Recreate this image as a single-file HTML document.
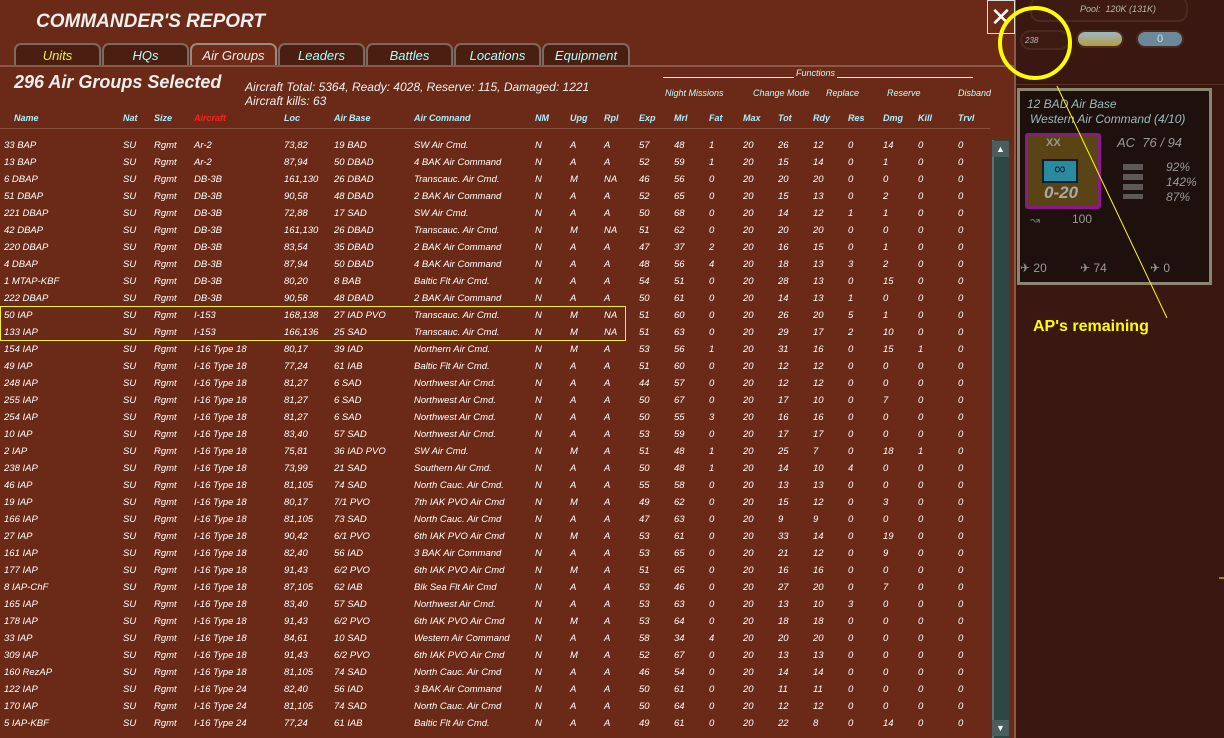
<!DOCTYPE html>
<html><head><meta charset="utf-8"><style>
*{margin:0;padding:0;box-sizing:border-box}
body{width:1224px;height:738px;overflow:hidden;background:#6b2a17;font-family:"Liberation Sans",sans-serif;position:relative;color:#fff}
.a{position:absolute;white-space:nowrap}
.title{left:36px;top:11px;font-size:19px;font-weight:bold;font-style:italic;color:#eee}
.tab{position:absolute;top:43px;height:23px;border:2px solid #7a6a60;border-bottom:none;border-radius:7px 7px 0 0;background:#4a1f12;font-size:13px;font-style:italic;color:#aff;text-align:center;line-height:21px}
.tab.act{background:#6e2c18;color:#eee;border-color:#9a8a80}
.sel{left:14px;top:72px;font-size:18px;font-weight:bold;font-style:italic;color:#eee}
.st{font-size:12px;font-style:italic;color:#eee}
.fn{font-size:9px;font-style:italic;color:#bff;top:88px}
.hd{position:absolute;top:113px;left:0;width:990px;height:12px;font-size:9px;font-weight:bold;font-style:italic;color:#aef}
.hd i,.r i{position:absolute;font-style:italic;white-space:nowrap}
.r{position:absolute;left:0;width:990px;height:12px;font-size:9.5px;color:#fff}
.r i:nth-child(1),.hd i:nth-child(1){left:4px}
.hd i:nth-child(1){left:14px}
.r i:nth-child(2),.hd i:nth-child(2){left:123px}
.r i:nth-child(3),.hd i:nth-child(3){left:154px}
.r i:nth-child(4),.hd i:nth-child(4){left:194px}
.r i:nth-child(5),.hd i:nth-child(5){left:284px}
.r i:nth-child(6),.hd i:nth-child(6){left:334px}
.r i:nth-child(7),.hd i:nth-child(7){left:414px}
.r i:nth-child(8),.hd i:nth-child(8){left:535px}
.r i:nth-child(9),.hd i:nth-child(9){left:570px}
.r i:nth-child(10),.hd i:nth-child(10){left:604px}
.r i:nth-child(11),.hd i:nth-child(11){left:639px}
.r i:nth-child(12),.hd i:nth-child(12){left:674px}
.r i:nth-child(13),.hd i:nth-child(13){left:709px}
.r i:nth-child(14),.hd i:nth-child(14){left:743px}
.r i:nth-child(15),.hd i:nth-child(15){left:778px}
.r i:nth-child(16),.hd i:nth-child(16){left:813px}
.r i:nth-child(17),.hd i:nth-child(17){left:848px}
.r i:nth-child(18),.hd i:nth-child(18){left:883px}
.r i:nth-child(19),.hd i:nth-child(19){left:918px}
.r i:nth-child(20),.hd i:nth-child(20){left:958px}
.pill{position:absolute;border-radius:10px;border:2px solid #4a2a20}
</style></head><body>
<div class="a title">COMMANDER'S REPORT</div>
<div class="tab" style="left:14px;width:87px;color:#ee3">Units</div>
<div class="tab" style="left:102px;width:87px">HQs</div>
<div class="tab act" style="left:190px;width:87px">Air Groups</div>
<div class="tab" style="left:278px;width:87px">Leaders</div>
<div class="tab" style="left:366px;width:87px">Battles</div>
<div class="tab" style="left:454px;width:87px">Locations</div>
<div class="tab" style="left:542px;width:88px">Equipment</div>
<div class="a" style="left:0;top:65px;width:1014px;height:2px;background:#8a5a48"></div>
<div class="a sel">296 Air Groups Selected</div>
<div class="a st" style="left:245px;top:80px">Aircraft Total: 5364, Ready: 4028, Reserve: 115, Damaged: 1221</div>
<div class="a st" style="left:245px;top:94px">Aircraft kills: 63</div>
<div class="a" style="left:663px;top:77px;width:310px;height:1px;background:#eee"></div>
<div class="a fn" style="left:794px;top:68px;background:#6b2a17;padding:0 2px">Functions</div>
<div class="a fn" style="left:665px">Night Missions</div>
<div class="a fn" style="left:753px">Change Mode</div>
<div class="a fn" style="left:826px">Replace</div>
<div class="a fn" style="left:887px">Reserve</div>
<div class="a fn" style="left:958px">Disband</div>
<div class="hd"><i>Name</i><i>Nat</i><i>Size</i><i style="color:#f22">Aircraft</i><i>Loc</i><i>Air Base</i><i>Air Comnand</i><i>NM</i><i>Upg</i><i>Rpl</i><i>Exp</i><i>Mrl</i><i>Fat</i><i>Max</i><i>Tot</i><i>Rdy</i><i>Res</i><i>Dmg</i><i>Kill</i><i>Trvl</i></div>
<div class="a" style="left:0;top:128px;width:990px;height:1px;background:#8a5040"></div>

<div class="r" style="top:140px"><i>33 BAP</i><i>SU</i><i>Rgmt</i><i>Ar-2</i><i>73,82</i><i>19 BAD</i><i>SW Air Cmd.</i><i>N</i><i>A</i><i>A</i><i>57</i><i>48</i><i>1</i><i>20</i><i>26</i><i>12</i><i>0</i><i>14</i><i>0</i><i>0</i></div>
<div class="r" style="top:157px"><i>13 BAP</i><i>SU</i><i>Rgmt</i><i>Ar-2</i><i>87,94</i><i>50 DBAD</i><i>4 BAK Air Command</i><i>N</i><i>A</i><i>A</i><i>52</i><i>59</i><i>1</i><i>20</i><i>15</i><i>14</i><i>0</i><i>1</i><i>0</i><i>0</i></div>
<div class="r" style="top:174px"><i>6 DBAP</i><i>SU</i><i>Rgmt</i><i>DB-3B</i><i>161,130</i><i>26 DBAD</i><i>Transcauc. Air Cmd.</i><i>N</i><i>M</i><i>NA</i><i>46</i><i>56</i><i>0</i><i>20</i><i>20</i><i>20</i><i>0</i><i>0</i><i>0</i><i>0</i></div>
<div class="r" style="top:191px"><i>51 DBAP</i><i>SU</i><i>Rgmt</i><i>DB-3B</i><i>90,58</i><i>48 DBAD</i><i>2 BAK Air Command</i><i>N</i><i>A</i><i>A</i><i>52</i><i>65</i><i>0</i><i>20</i><i>15</i><i>13</i><i>0</i><i>2</i><i>0</i><i>0</i></div>
<div class="r" style="top:208px"><i>221 DBAP</i><i>SU</i><i>Rgmt</i><i>DB-3B</i><i>72,88</i><i>17 SAD</i><i>SW Air Cmd.</i><i>N</i><i>A</i><i>A</i><i>50</i><i>68</i><i>0</i><i>20</i><i>14</i><i>12</i><i>1</i><i>1</i><i>0</i><i>0</i></div>
<div class="r" style="top:225px"><i>42 DBAP</i><i>SU</i><i>Rgmt</i><i>DB-3B</i><i>161,130</i><i>26 DBAD</i><i>Transcauc. Air Cmd.</i><i>N</i><i>M</i><i>NA</i><i>51</i><i>62</i><i>0</i><i>20</i><i>20</i><i>20</i><i>0</i><i>0</i><i>0</i><i>0</i></div>
<div class="r" style="top:242px"><i>220 DBAP</i><i>SU</i><i>Rgmt</i><i>DB-3B</i><i>83,54</i><i>35 DBAD</i><i>2 BAK Air Command</i><i>N</i><i>A</i><i>A</i><i>47</i><i>37</i><i>2</i><i>20</i><i>16</i><i>15</i><i>0</i><i>1</i><i>0</i><i>0</i></div>
<div class="r" style="top:259px"><i>4 DBAP</i><i>SU</i><i>Rgmt</i><i>DB-3B</i><i>87,94</i><i>50 DBAD</i><i>4 BAK Air Command</i><i>N</i><i>A</i><i>A</i><i>48</i><i>56</i><i>4</i><i>20</i><i>18</i><i>13</i><i>3</i><i>2</i><i>0</i><i>0</i></div>
<div class="r" style="top:276px"><i>1 MTAP-KBF</i><i>SU</i><i>Rgmt</i><i>DB-3B</i><i>80,20</i><i>8 BAB</i><i>Baltic Flt Air Cmd.</i><i>N</i><i>A</i><i>A</i><i>54</i><i>51</i><i>0</i><i>20</i><i>28</i><i>13</i><i>0</i><i>15</i><i>0</i><i>0</i></div>
<div class="r" style="top:293px"><i>222 DBAP</i><i>SU</i><i>Rgmt</i><i>DB-3B</i><i>90,58</i><i>48 DBAD</i><i>2 BAK Air Command</i><i>N</i><i>A</i><i>A</i><i>50</i><i>61</i><i>0</i><i>20</i><i>14</i><i>13</i><i>1</i><i>0</i><i>0</i><i>0</i></div>
<div class="r" style="top:310px"><i>50 IAP</i><i>SU</i><i>Rgmt</i><i>I-153</i><i>168,138</i><i>27 IAD PVO</i><i>Transcauc. Air Cmd.</i><i>N</i><i>M</i><i>NA</i><i>51</i><i>60</i><i>0</i><i>20</i><i>26</i><i>20</i><i>5</i><i>1</i><i>0</i><i>0</i></div>
<div class="r" style="top:327px"><i>133 IAP</i><i>SU</i><i>Rgmt</i><i>I-153</i><i>166,136</i><i>25 SAD</i><i>Transcauc. Air Cmd.</i><i>N</i><i>M</i><i>NA</i><i>51</i><i>63</i><i>0</i><i>20</i><i>29</i><i>17</i><i>2</i><i>10</i><i>0</i><i>0</i></div>
<div class="r" style="top:344px"><i>154 IAP</i><i>SU</i><i>Rgmt</i><i>I-16 Type 18</i><i>80,17</i><i>39 IAD</i><i>Northern Air Cmd.</i><i>N</i><i>M</i><i>A</i><i>53</i><i>56</i><i>1</i><i>20</i><i>31</i><i>16</i><i>0</i><i>15</i><i>1</i><i>0</i></div>
<div class="r" style="top:361px"><i>49 IAP</i><i>SU</i><i>Rgmt</i><i>I-16 Type 18</i><i>77,24</i><i>61 IAB</i><i>Baltic Flt Air Cmd.</i><i>N</i><i>A</i><i>A</i><i>51</i><i>60</i><i>0</i><i>20</i><i>12</i><i>12</i><i>0</i><i>0</i><i>0</i><i>0</i></div>
<div class="r" style="top:378px"><i>248 IAP</i><i>SU</i><i>Rgmt</i><i>I-16 Type 18</i><i>81,27</i><i>6 SAD</i><i>Northwest Air Cmd.</i><i>N</i><i>A</i><i>A</i><i>44</i><i>57</i><i>0</i><i>20</i><i>12</i><i>12</i><i>0</i><i>0</i><i>0</i><i>0</i></div>
<div class="r" style="top:395px"><i>255 IAP</i><i>SU</i><i>Rgmt</i><i>I-16 Type 18</i><i>81,27</i><i>6 SAD</i><i>Northwest Air Cmd.</i><i>N</i><i>A</i><i>A</i><i>50</i><i>67</i><i>0</i><i>20</i><i>17</i><i>10</i><i>0</i><i>7</i><i>0</i><i>0</i></div>
<div class="r" style="top:412px"><i>254 IAP</i><i>SU</i><i>Rgmt</i><i>I-16 Type 18</i><i>81,27</i><i>6 SAD</i><i>Northwest Air Cmd.</i><i>N</i><i>A</i><i>A</i><i>50</i><i>55</i><i>3</i><i>20</i><i>16</i><i>16</i><i>0</i><i>0</i><i>0</i><i>0</i></div>
<div class="r" style="top:429px"><i>10 IAP</i><i>SU</i><i>Rgmt</i><i>I-16 Type 18</i><i>83,40</i><i>57 SAD</i><i>Northwest Air Cmd.</i><i>N</i><i>A</i><i>A</i><i>53</i><i>59</i><i>0</i><i>20</i><i>17</i><i>17</i><i>0</i><i>0</i><i>0</i><i>0</i></div>
<div class="r" style="top:446px"><i>2 IAP</i><i>SU</i><i>Rgmt</i><i>I-16 Type 18</i><i>75,81</i><i>36 IAD PVO</i><i>SW Air Cmd.</i><i>N</i><i>M</i><i>A</i><i>51</i><i>48</i><i>1</i><i>20</i><i>25</i><i>7</i><i>0</i><i>18</i><i>1</i><i>0</i></div>
<div class="r" style="top:463px"><i>238 IAP</i><i>SU</i><i>Rgmt</i><i>I-16 Type 18</i><i>73,99</i><i>21 SAD</i><i>Southern Air Cmd.</i><i>N</i><i>A</i><i>A</i><i>50</i><i>48</i><i>1</i><i>20</i><i>14</i><i>10</i><i>4</i><i>0</i><i>0</i><i>0</i></div>
<div class="r" style="top:480px"><i>46 IAP</i><i>SU</i><i>Rgmt</i><i>I-16 Type 18</i><i>81,105</i><i>74 SAD</i><i>North Cauc. Air Cmd.</i><i>N</i><i>A</i><i>A</i><i>55</i><i>58</i><i>0</i><i>20</i><i>13</i><i>13</i><i>0</i><i>0</i><i>0</i><i>0</i></div>
<div class="r" style="top:497px"><i>19 IAP</i><i>SU</i><i>Rgmt</i><i>I-16 Type 18</i><i>80,17</i><i>7/1 PVO</i><i>7th IAK PVO Air Cmd</i><i>N</i><i>M</i><i>A</i><i>49</i><i>62</i><i>0</i><i>20</i><i>15</i><i>12</i><i>0</i><i>3</i><i>0</i><i>0</i></div>
<div class="r" style="top:514px"><i>166 IAP</i><i>SU</i><i>Rgmt</i><i>I-16 Type 18</i><i>81,105</i><i>73 SAD</i><i>North Cauc. Air Cmd</i><i>N</i><i>A</i><i>A</i><i>47</i><i>63</i><i>0</i><i>20</i><i>9</i><i>9</i><i>0</i><i>0</i><i>0</i><i>0</i></div>
<div class="r" style="top:531px"><i>27 IAP</i><i>SU</i><i>Rgmt</i><i>I-16 Type 18</i><i>90,42</i><i>6/1 PVO</i><i>6th IAK PVO Air Cmd</i><i>N</i><i>M</i><i>A</i><i>53</i><i>61</i><i>0</i><i>20</i><i>33</i><i>14</i><i>0</i><i>19</i><i>0</i><i>0</i></div>
<div class="r" style="top:548px"><i>161 IAP</i><i>SU</i><i>Rgmt</i><i>I-16 Type 18</i><i>82,40</i><i>56 IAD</i><i>3 BAK Air Command</i><i>N</i><i>A</i><i>A</i><i>53</i><i>65</i><i>0</i><i>20</i><i>21</i><i>12</i><i>0</i><i>9</i><i>0</i><i>0</i></div>
<div class="r" style="top:565px"><i>177 IAP</i><i>SU</i><i>Rgmt</i><i>I-16 Type 18</i><i>91,43</i><i>6/2 PVO</i><i>6th IAK PVO Air Cmd</i><i>N</i><i>M</i><i>A</i><i>51</i><i>65</i><i>0</i><i>20</i><i>16</i><i>16</i><i>0</i><i>0</i><i>0</i><i>0</i></div>
<div class="r" style="top:582px"><i>8 IAP-ChF</i><i>SU</i><i>Rgmt</i><i>I-16 Type 18</i><i>87,105</i><i>62 IAB</i><i>Blk Sea Flt Air Cmd</i><i>N</i><i>A</i><i>A</i><i>53</i><i>46</i><i>0</i><i>20</i><i>27</i><i>20</i><i>0</i><i>7</i><i>0</i><i>0</i></div>
<div class="r" style="top:599px"><i>165 IAP</i><i>SU</i><i>Rgmt</i><i>I-16 Type 18</i><i>83,40</i><i>57 SAD</i><i>Northwest Air Cmd.</i><i>N</i><i>A</i><i>A</i><i>53</i><i>63</i><i>0</i><i>20</i><i>13</i><i>10</i><i>3</i><i>0</i><i>0</i><i>0</i></div>
<div class="r" style="top:616px"><i>178 IAP</i><i>SU</i><i>Rgmt</i><i>I-16 Type 18</i><i>91,43</i><i>6/2 PVO</i><i>6th IAK PVO Air Cmd</i><i>N</i><i>M</i><i>A</i><i>53</i><i>64</i><i>0</i><i>20</i><i>18</i><i>18</i><i>0</i><i>0</i><i>0</i><i>0</i></div>
<div class="r" style="top:633px"><i>33 IAP</i><i>SU</i><i>Rgmt</i><i>I-16 Type 18</i><i>84,61</i><i>10 SAD</i><i>Western Air Command</i><i>N</i><i>A</i><i>A</i><i>58</i><i>34</i><i>4</i><i>20</i><i>20</i><i>20</i><i>0</i><i>0</i><i>0</i><i>0</i></div>
<div class="r" style="top:650px"><i>309 IAP</i><i>SU</i><i>Rgmt</i><i>I-16 Type 18</i><i>91,43</i><i>6/2 PVO</i><i>6th IAK PVO Air Cmd</i><i>N</i><i>M</i><i>A</i><i>52</i><i>67</i><i>0</i><i>20</i><i>13</i><i>13</i><i>0</i><i>0</i><i>0</i><i>0</i></div>
<div class="r" style="top:667px"><i>160 RezAP</i><i>SU</i><i>Rgmt</i><i>I-16 Type 18</i><i>81,105</i><i>74 SAD</i><i>North Cauc. Air Cmd</i><i>N</i><i>A</i><i>A</i><i>46</i><i>54</i><i>0</i><i>20</i><i>14</i><i>14</i><i>0</i><i>0</i><i>0</i><i>0</i></div>
<div class="r" style="top:684px"><i>122 IAP</i><i>SU</i><i>Rgmt</i><i>I-16 Type 24</i><i>82,40</i><i>56 IAD</i><i>3 BAK Air Command</i><i>N</i><i>A</i><i>A</i><i>50</i><i>61</i><i>0</i><i>20</i><i>11</i><i>11</i><i>0</i><i>0</i><i>0</i><i>0</i></div>
<div class="r" style="top:701px"><i>170 IAP</i><i>SU</i><i>Rgmt</i><i>I-16 Type 24</i><i>81,105</i><i>74 SAD</i><i>North Cauc. Air Cmd</i><i>N</i><i>A</i><i>A</i><i>50</i><i>64</i><i>0</i><i>20</i><i>12</i><i>12</i><i>0</i><i>0</i><i>0</i><i>0</i></div>
<div class="r" style="top:718px"><i>5 IAP-KBF</i><i>SU</i><i>Rgmt</i><i>I-16 Type 24</i><i>77,24</i><i>61 IAB</i><i>Baltic Flt Air Cmd.</i><i>N</i><i>A</i><i>A</i><i>49</i><i>61</i><i>0</i><i>20</i><i>22</i><i>8</i><i>0</i><i>14</i><i>0</i><i>0</i></div>

<div class="a" style="left:0;top:306px;width:626px;height:35px;border:1px solid #ee3"></div>

<div class="a" style="left:992px;top:140px;width:17px;height:598px;background:#2f4646;border-left:2px solid #5a7474"></div>
<div class="a" style="left:992px;top:141px;width:17px;height:16px;background:#4a5e5e;color:#fff;font-size:9px;text-align:center;line-height:16px">▲</div>
<div class="a" style="left:992px;top:720px;width:17px;height:16px;background:#4a5e5e;color:#fff;font-size:9px;text-align:center;line-height:16px">▼</div>

<div class="a" style="left:1014px;top:0;width:2px;height:738px;background:#8a5a48"></div>
<div class="a" style="left:1016px;top:0;width:208px;height:738px;background:#3a1710"></div>
<div class="a" style="left:1016px;top:84px;width:208px;height:1px;background:#5a3428"></div>
<div class="a" style="left:987px;top:0;width:28px;height:34px;border:1px solid #ddd;background:#6b2a17;color:#fff;font-size:26px;line-height:32px;text-align:center">✕</div>
<div class="pill" style="left:1030px;top:-4px;width:158px;height:26px;background:#3d1a12"></div>
<div class="a" style="left:1080px;top:4px;font-size:9px;font-style:italic;color:#bba">Pool:&nbsp; 120K (131K)</div>
<div class="pill" style="left:1020px;top:30px;width:50px;height:20px;background:#3d1a12"></div>
<div class="a" style="left:1025px;top:36px;font-size:8px;color:#bbb;font-style:italic">238</div>
<div class="pill" style="left:1076px;top:30px;width:48px;height:18px;background:linear-gradient(#9ab8c8,#b89a40)"></div>
<div class="pill" style="left:1136px;top:30px;width:48px;height:18px;background:#6a8a9a;color:#cde;font-size:11px;text-align:center;line-height:14px">0</div>

<div class="a" style="left:1017px;top:88px;width:195px;height:197px;border:3px solid #8a8670;background:#1e100c"></div>
<div class="a" style="left:1027px;top:97px;font-size:12px;font-style:italic;color:#9bb">12 BAD Air Base</div>
<div class="a" style="left:1030px;top:112px;font-size:12px;font-style:italic;color:#9bb">Western Air Command (4/10)</div>
<div class="a" style="left:1025px;top:133px;width:76px;height:76px;border:3px solid #8a1a8a;border-radius:3px;background:#5a4416"></div>
<div class="a" style="left:1046px;top:137px;font-size:11px;font-weight:bold;color:#998">XX</div>
<div class="a" style="left:1042px;top:159px;width:36px;height:24px;background:#2a8aa0;border:2px solid #0a2030;color:#0a2030;font-size:16px;text-align:center;line-height:18px">∞</div>
<div class="a" style="left:1044px;top:183px;font-size:17px;font-weight:bold;font-style:italic;color:#aaa">0-20</div>
<div class="a" style="left:1117px;top:135px;font-size:13px;font-style:italic;color:#999">AC&nbsp; 76 / 94</div>
<div class="a" style="left:1166px;top:160px;font-size:12px;font-style:italic;color:#999;line-height:15px">92%<br>142%<br>87%</div>
<div class="a" style="left:1123px;top:164px;width:20px;height:35px;background:repeating-linear-gradient(#888 0 6px,transparent 6px 10px);opacity:.6"></div>
<div class="a" style="left:1072px;top:212px;font-size:12px;color:#999">100</div>
<div class="a" style="left:1030px;top:213px;font-size:12px;color:#777">↝</div>
<div class="a" style="left:1020px;top:261px;font-size:12px;color:#999">✈ 20</div>
<div class="a" style="left:1080px;top:261px;font-size:12px;color:#999">✈ 74</div>
<div class="a" style="left:1150px;top:261px;font-size:12px;color:#999">✈ 0</div>

<svg class="a" style="left:0;top:0" width="1224" height="738">
<circle cx="1035" cy="43" r="35" fill="none" stroke="#ff0" stroke-width="4"/>
<line x1="1057" y1="86" x2="1167" y2="318" stroke="#ff0" stroke-width="1"/>
<line x1="1219" y1="578" x2="1224" y2="578" stroke="#ff0" stroke-width="1"/>
</svg>
<div class="a" style="left:1033px;top:318px;font-size:16px;font-weight:bold;color:#ff0">AP's remaining</div>
</body></html>
